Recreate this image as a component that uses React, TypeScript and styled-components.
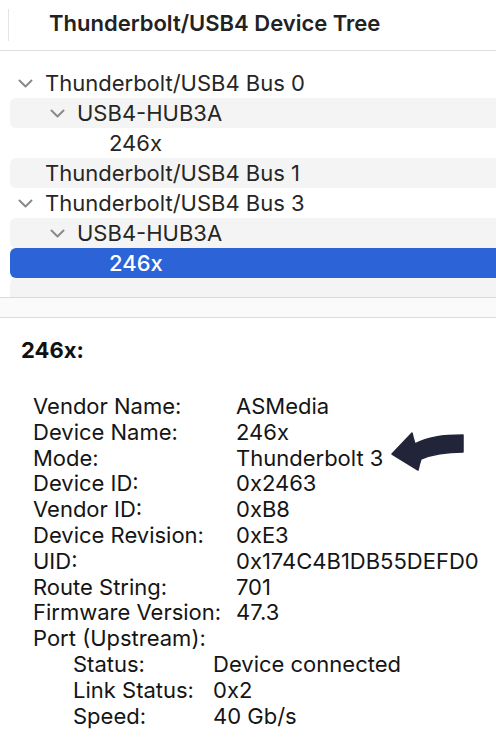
import React from "react";
import styled, { createGlobalStyle } from "styled-components";

const Global = createGlobalStyle`
  html, body { margin: 0; padding: 0; background: #ffffff; }
  body { font-family: Inter, "Noto Sans", "Liberation Sans", sans-serif; color: #1f1f1f; }
`;

const Page = styled.div`
  width: 496px;
  height: 748px;
  overflow: hidden;
  position: relative;
  background: #fff;
`;

const Header = styled.div`
  height: 51px;
  border-bottom: 1px solid #dedede;
  display: flex;
  align-items: center;
  padding-bottom: 4px;
  box-sizing: border-box;
  position: relative;
`;

const HeaderDivider = styled.div`
  width: 1px;
  height: 32px;
  margin-left: 8px;
  margin-top: 4px;
  background: #e4e4e4;
`;

const HeaderTitle = styled.div`
  margin-left: 40px;
  font-size: 22px;
  font-weight: 600;
  color: #222;
`;

const Tree = styled.div`
  height: 247px;
  padding-top: 17px;
  box-sizing: border-box;
  overflow: hidden;
  border-bottom: 1px solid #d9d9d9;
`;

const Row = styled.div<{ $shade?: boolean; $selected?: boolean; $indent: number }>`
  height: 30px;
  margin-left: 10px;
  border-radius: 6px 0 0 6px;
  display: flex;
  align-items: center;
  padding-left: ${(p) => 8 + p.$indent * 32}px;
  background: ${(p) => (p.$selected ? "#2c63d7" : p.$shade ? "#f4f4f4" : "transparent")};
  color: ${(p) => (p.$selected ? "#ffffff" : "#262626")};
  font-size: 22px;
  font-weight: ${(p) => (p.$selected ? 500 : 400)};
`;

const ChevronSlot = styled.span`
  width: 27px;
  display: inline-flex;
  align-items: center;
  flex-shrink: 0;
`;

const Band = styled.div`
  height: 19px;
  background: #fafafa;
  border-bottom: 1px solid #dcdcdc;
`;

const Detail = styled.div`
  padding: 19px 0 0 21px;
  position: relative;
`;

const DetailTitle = styled.div`
  font-size: 22px;
  font-weight: 700;
  line-height: 26px;
  color: #111;
  margin-bottom: 31px;
`;

const Props = styled.div`
  padding-left: 12px;
  font-size: 22px;
  line-height: 25.8px;
  color: #151515;
`;

const PropRow = styled.div<{ $labelWidth: number; $indent?: number }>`
  display: grid;
  grid-template-columns: ${(p) => p.$labelWidth}px auto;
  padding-left: ${(p) => p.$indent ?? 0}px;
  white-space: nowrap;
`;

const Arrow = styled.svg`
  position: absolute;
  left: 380px;
  top: 425px;
`;

const Chevron = () => (
  <svg width="15" height="9" viewBox="0 0 15 9">
    <path d="M1.5 1.5 L7.5 7.5 L13.5 1.5" fill="none" stroke="#8a8a8a" strokeWidth="2" strokeLinecap="round" strokeLinejoin="round" />
  </svg>
);

type Node = { label: string; indent: number; expandable?: boolean; selected?: boolean };

const nodes: Node[] = [
  { label: "Thunderbolt/USB4 Bus 0", indent: 0, expandable: true },
  { label: "USB4-HUB3A", indent: 1, expandable: true },
  { label: "246x", indent: 2 },
  { label: "Thunderbolt/USB4 Bus 1", indent: 0 },
  { label: "Thunderbolt/USB4 Bus 3", indent: 0, expandable: true },
  { label: "USB4-HUB3A", indent: 1, expandable: true },
  { label: "246x", indent: 2, selected: true },
  { label: "", indent: 0 },
];

const props: [string, string][] = [
  ["Vendor Name:", "ASMedia"],
  ["Device Name:", "246x"],
  ["Mode:", "Thunderbolt 3"],
  ["Device ID:", "0x2463"],
  ["Vendor ID:", "0xB8"],
  ["Device Revision:", "0xE3"],
  ["UID:", "0x174C4B1DB55DEFD0"],
  ["Route String:", "701"],
  ["Firmware Version:", "47.3"],
];

const port: [string, string][] = [
  ["Status:", "Device connected"],
  ["Link Status:", "0x2"],
  ["Speed:", "40 Gb/s"],
];

export default function App() {
  return (
    <Page>
      <Global />
      <Header>
        <HeaderDivider />
        <HeaderTitle>Thunderbolt/USB4 Device Tree</HeaderTitle>
      </Header>
      <Tree>
        {nodes.map((n, i) => (
          <Row key={i} $indent={n.indent} $shade={i % 2 === 1} $selected={n.selected}>
            <ChevronSlot>{n.expandable ? <Chevron /> : null}</ChevronSlot>
            {n.label}
          </Row>
        ))}
      </Tree>
      <Band />
      <Detail>
        <DetailTitle>246x:</DetailTitle>
        <Props>
          {props.map(([k, v]) => (
            <PropRow key={k} $labelWidth={203}>
              <span>{k}</span>
              <span>{v}</span>
            </PropRow>
          ))}
          <PropRow $labelWidth={203}>
            <span>Port (Upstream):</span>
            <span />
          </PropRow>
          {port.map(([k, v]) => (
            <PropRow key={k} $labelWidth={140} $indent={40}>
              <span>{k}</span>
              <span>{v}</span>
            </PropRow>
          ))}
        </Props>
      </Detail>
      <Arrow width="100" height="55" viewBox="0 0 100 55">
        <path
          d="M12 29 L32 8 Q33 13 35 19 C48 12 62 10 83 10 L83 27 C66 27 53 29 41 34 Q39 40 38 45 Z"
          fill="#22253a"
          strokeLinejoin="round"
          stroke="#22253a"
          strokeWidth="1.5"
        />
      </Arrow>
    </Page>
  );
}
